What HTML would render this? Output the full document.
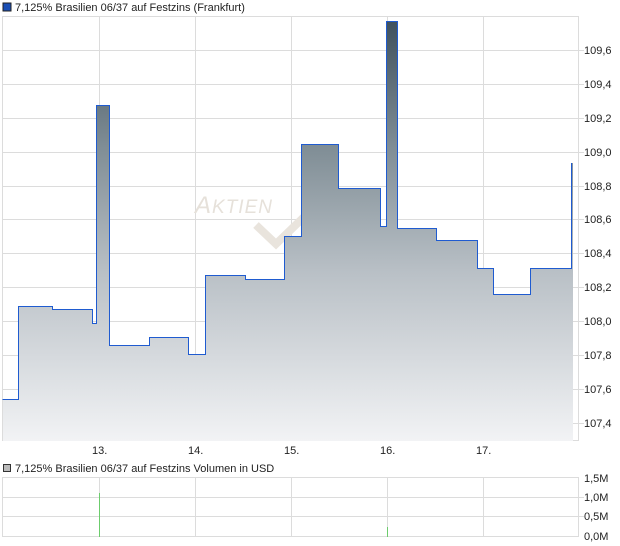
<!DOCTYPE html>
<html><head><meta charset="utf-8"><style>
body{margin:0;width:620px;height:546px;background:#fff;overflow:hidden;font-family:"Liberation Sans",sans-serif;}
svg{position:absolute;left:0;top:0}
</style></head><body>
<svg width="620" height="546" xmlns="http://www.w3.org/2000/svg" font-family="Liberation Sans, sans-serif" font-size="11" fill="#222">
<defs>
<linearGradient id="g" x1="0" y1="20" x2="0" y2="441" gradientUnits="userSpaceOnUse">
<stop offset="0" stop-color="#3e505d"/>
<stop offset="0.3" stop-color="#7f8d95"/>
<stop offset="0.6" stop-color="#b9c0c6"/>
<stop offset="1" stop-color="#f2f3f5"/>
</linearGradient>
</defs>
<rect x="3" y="3" width="8" height="8" fill="#1a4fb5" stroke="#222" stroke-width="1"/>
<text x="15" y="11">7,125% Brasilien 06/37 auf Festzins (Frankfurt)</text>
<g stroke="#dcdcdc" stroke-width="1" fill="none">
<rect x="2.5" y="16.5" width="576" height="424"/>
<path d="M99.5 16V441M195.5 16V441M291.5 16V441M387.5 16V441M483.5 16V441"/>
<path d="M2 50.5H584M2 84.5H584M2 118.5H584M2 152.5H584M2 186.5H584M2 219.5H584M2 253.5H584M2 287.5H584M2 321.5H584M2 355.5H584M2 389.5H584M2 423.5H584"/>
</g>
<text x="195" y="213" font-size="24" font-style="italic" fill="#e6e1da" letter-spacing="1">A<tspan font-size="19">KTIEN</tspan></text>
<path d="M256 225 L276 244 L304 217" stroke="#e9e4dd" stroke-width="8" fill="none"/>
<path d="M3 400H18V306H52V309H92V323H96V105H109V345H149V337H188V354H205V275H245V279H284V236H301V144H338V188H380V226H386V21H397V228H436V240H477V268H493V294H530V268H571V163H573V441H3Z" fill="url(#g)"/>
<path d="M2.5 399.5H18.5V306.5H52.5V309.5H92.5V323.5H96.5V105.5H109.5V345.5H149.5V337.5H188.5V354.5H205.5V275.5H245.5V279.5H284.5V236.5H301.5V144.5H338.5V188.5H380.5V226.5H386.5V21.5H397.5V228.5H436.5V240.5H477.5V268.5H493.5V294.5H530.5V268.5H571.5V163" fill="none" stroke="#1f5bd0" stroke-width="1"/>
<g fill="#222">
<text x="584" y="54">109,6</text><text x="584" y="88">109,4</text><text x="584" y="122">109,2</text><text x="584" y="156">109,0</text><text x="584" y="190">108,8</text><text x="584" y="223">108,6</text><text x="584" y="257">108,4</text><text x="584" y="291">108,2</text><text x="584" y="325">108,0</text><text x="584" y="359">107,8</text><text x="584" y="393">107,6</text><text x="584" y="427">107,4</text>
<text x="92" y="454">13.</text><text x="188" y="454">14.</text><text x="284" y="454">15.</text><text x="380" y="454">16.</text><text x="476" y="454">17.</text>
</g>
<rect x="3.5" y="464.5" width="7" height="7" fill="#bbb" stroke="#333" stroke-width="1"/>
<text x="15" y="472">7,125% Brasilien 06/37 auf Festzins Volumen in USD</text>
<g stroke="#dcdcdc" stroke-width="1" fill="none">
<rect x="2.5" y="477.5" width="576" height="59"/>
<path d="M99.5 477V537M195.5 477V537M291.5 477V537M387.5 477V537M483.5 477V537"/>
<path d="M2 497.5H584M2 516.5H584"/>
</g>
<path d="M99.5 493V537M387.5 527V537" stroke="#6ccc6c" stroke-width="1"/>
<text x="584" y="482">1,5M</text><text x="584" y="501">1,0M</text><text x="584" y="520">0,5M</text><text x="584" y="540">0,0M</text>
</svg>
</body></html>
